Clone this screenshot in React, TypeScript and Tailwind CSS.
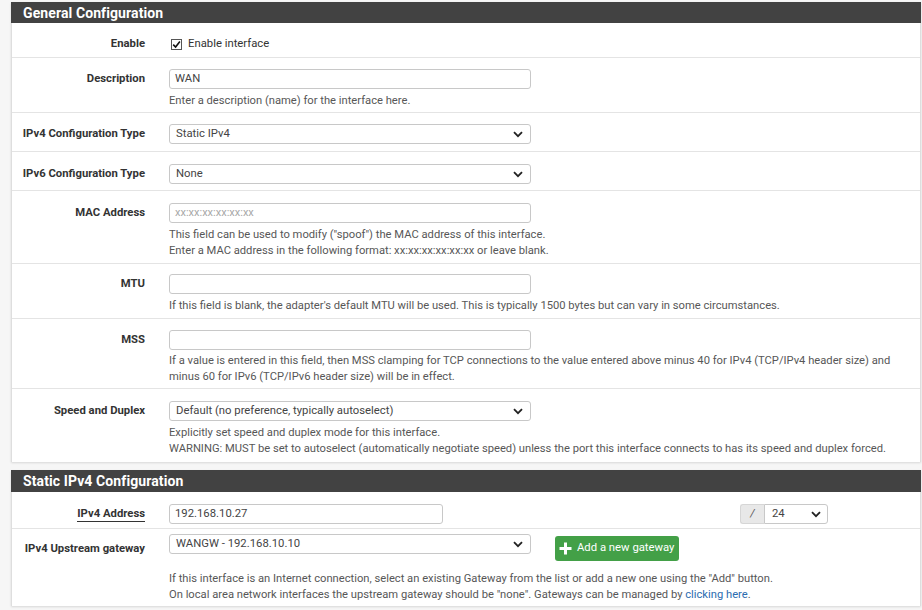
import React from "react";

// pfSense 風のインターフェース設定フォーム（General / Static IPv4）
const FONT = { fontFamily: "Roboto, 'Liberation Sans', sans-serif" };

function Chevron() {
  return (
    <svg width="10" height="7" viewBox="0 0 10 7" className="shrink-0">
      <path d="M1 1.2 L5 5.2 L9 1.2" fill="none" stroke="#222" strokeWidth="1.8" />
    </svg>
  );
}

function Select({ value, className = "" }: { value: string; className?: string }) {
  return (
    <div
      className={`flex h-[20px] items-center justify-between rounded-[3px] border border-[#c8c8c8] bg-white pl-[6px] pr-[7px] text-[11.3px] text-[#444] ${className}`}
    >
      <span>{value}</span>
      <Chevron />
    </div>
  );
}

function Input({
  value,
  placeholder,
  className = "w-[362px]",
}: {
  value?: string;
  placeholder?: string;
  className?: string;
}) {
  return (
    <div
      className={`flex h-[20px] items-center rounded-[3px] border border-[#c8c8c8] bg-white pl-[5px] text-[11.3px] ${className}`}
    >
      {value ? (
        <span className="text-[#444]">{value}</span>
      ) : (
        <span className="text-[11px] text-[#a8a8a8]">{placeholder}</span>
      )}
    </div>
  );
}

function Help({ children, className = "mt-[4px]" }: { children: React.ReactNode; className?: string }) {
  return <div className={`text-[11.2px] leading-[16px] text-[#575757] ${className}`}>{children}</div>;
}

function Row({
  label,
  children,
  className = "pt-[11px] pb-[5px]",
  labelClass = "leading-[20px]",
  underline = false,
}: {
  label: string;
  children: React.ReactNode;
  className?: string;
  labelClass?: string;
  underline?: boolean;
}) {
  return (
    <div className={`flex gap-[24px] border-b border-[#e4e4e4] ${className}`}>
      <div className={`w-[133px] shrink-0 text-right text-[11.3px] font-bold text-[#333] ${labelClass}`}>
        <span className={underline ? "border-b border-[#333] pb-[1px]" : ""}>{label}</span>
      </div>
      <div className="min-w-0 flex-1">{children}</div>
    </div>
  );
}

function PanelHeader({ title, className = "h-[21px]" }: { title: string; className?: string }) {
  return (
    <div
      className={`flex items-center bg-[#424242] pl-[12px] pt-[1px] text-[14px] font-bold tracking-[0.1px] text-white ${className}`}
    >
      {title}
    </div>
  );
}

export default function App() {
  return (
    <div className="min-h-[610px] w-[922px] bg-[#f6f6f6] pl-[11px] pr-[1px] pt-[2px]" style={FONT}>
      {/* General Configuration */}
      <div className="bg-white shadow-[0_1px_2px_rgba(0,0,0,0.12)]">
        <PanelHeader title="General Configuration" />
        <div className="border-x border-[#dedede]">
          <Row label="Enable" className="pt-[13px] pb-[5px] h-[35px]" labelClass="leading-[16px]">
            <label className="flex items-center gap-[6px] text-[11.3px] leading-[16px] text-[#333]">
              <span className="ml-[2px] flex h-[11px] w-[11px] items-center justify-center border border-[#555] bg-white">
                <svg width="9" height="9" viewBox="0 0 9 9">
                  <path d="M1.2 4.6 L3.6 7 L7.9 1.6" fill="none" stroke="#111" strokeWidth="1.6" />
                </svg>
              </span>
              Enable interface
            </label>
          </Row>
          <Row label="Description" className="pt-[11px] pb-[3px]">
            <Input value="WAN" />
            <Help>Enter a description (name) for the interface here.</Help>
          </Row>
          <Row label="IPv4 Configuration Type" className="pt-[11px] pb-[7px]">
            <Select value="Static IPv4" className="w-[362px]" />
          </Row>
          <Row label="IPv6 Configuration Type" className="pt-[12px] pb-[6px]">
            <Select value="None" className="w-[362px]" />
          </Row>
          <Row label="MAC Address" className="pt-[12px] pb-[4px]">
            <Input placeholder="xx:xx:xx:xx:xx:xx" />
            <Help>
              This field can be used to modify ("spoof") the MAC address of this interface.
              <br />
              Enter a MAC address in the following format: xx:xx:xx:xx:xx:xx or leave blank.
            </Help>
          </Row>
          <Row label="MTU" className="pt-[10px] pb-[4px]">
            <Input />
            <Help>
              If this field is blank, the adapter's default MTU will be used. This is typically 1500
              bytes but can vary in some circumstances.
            </Help>
          </Row>
          <Row label="MSS" className="pt-[11px] pb-[3px]">
            <Input />
            <Help className="mt-[3px]">
              If a value is entered in this field, then MSS clamping for TCP connections to the value
              entered above minus 40 for IPv4 (TCP/IPv4 header size) and
              <br />
              minus 60 for IPv6 (TCP/IPv6 header size) will be in effect.
            </Help>
          </Row>
          <Row label="Speed and Duplex" className="pt-[12px] pb-[5px] border-b-0">
            <Select value="Default (no preference, typically autoselect)" className="w-[362px]" />
            <Help>
              Explicitly set speed and duplex mode for this interface.
              <br />
              WARNING: MUST be set to autoselect (automatically negotiate speed) unless the port this
              interface connects to has its speed and duplex forced.
            </Help>
          </Row>
        </div>
      </div>

      {/* Static IPv4 Configuration */}
      <div className="mt-[8px] bg-white shadow-[0_1px_2px_rgba(0,0,0,0.12)]">
        <PanelHeader title="Static IPv4 Configuration" className="h-[22px]" />
        <div className="border-x border-[#dedede]">
          <Row label="IPv4 Address" underline className="pt-[12px] pb-[4px]">
            <div className="flex items-center">
              <Input value="192.168.10.27" className="w-[274px]" />
              <div className="ml-auto mr-[92px] flex">
                <div className="flex h-[20px] w-[24px] items-center justify-center rounded-l-[3px] border border-r-0 border-[#d6d6d6] bg-[#e8e8e8] text-[11px] italic text-[#555]">
                  /
                </div>
                <div className="flex h-[20px] w-[64px] items-center justify-between rounded-r-[3px] border border-[#c8c8c8] bg-white pl-[7px] pr-[6px] text-[11.3px] text-[#444]">
                  <span>24</span>
                  <Chevron />
                </div>
              </div>
            </div>
          </Row>
          <Row
            label="IPv4 Upstream gateway"
            className="pt-[5px] pb-[3px] border-b-0"
            labelClass="mt-[2px] leading-[25px]"
          >
            <div className="flex items-start gap-[24px]">
              <Select value="WANGW - 192.168.10.10" className="w-[362px]" />
              <button
                type="button"
                className="mt-[2px] flex h-[25px] items-center gap-[5px] rounded-[3px] bg-[#43a047] pl-[4px] pr-[5px] text-[11.3px] text-white"
              >
                <svg width="13" height="13" viewBox="0 0 13 13">
                  <path d="M6.5 0.5 V12.5 M0.5 6.5 H12.5" stroke="#fff" strokeWidth="3" />
                </svg>
                Add a new gateway
              </button>
            </div>
            <Help className="mt-[10px]">
              If this interface is an Internet connection, select an existing Gateway from the list or
              add a new one using the "Add" button.
              <br />
              On local area network interfaces the upstream gateway should be "none". Gateways can be
              managed by <span className="text-[#2b6cb0]">clicking here</span>.
            </Help>
          </Row>
        </div>
      </div>
    </div>
  );
}
